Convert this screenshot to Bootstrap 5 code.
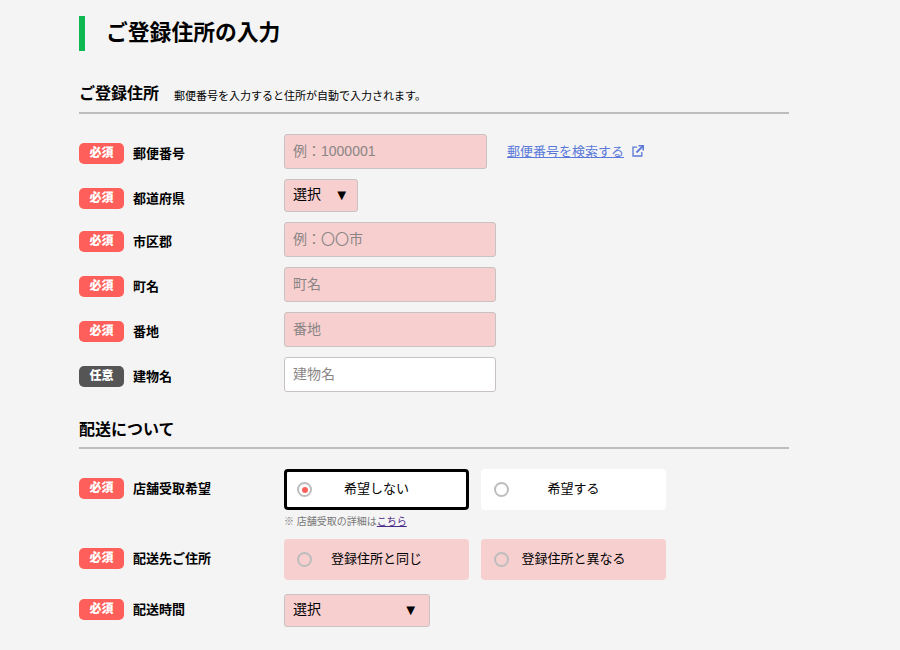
<!DOCTYPE html>
<html lang="ja">
<head>
<meta charset="utf-8">
<title>ご登録住所の入力</title>
<link href="https://cdn.jsdelivr.net/npm/bootstrap@5.3.0/dist/css/bootstrap.min.css" rel="stylesheet">
<style>
html, body { height: 650px; overflow: hidden; }
body { background: #f4f4f4; color: #000; font-family: "Liberation Sans", "Noto Sans CJK JP", sans-serif; }
.page-wrap { width: 710px; margin-left: 79px; padding-top: 16px; }
.page-title { border-left: 6px solid #0cb84f; padding-left: 21px; height: 35px; font-size: 21.8px; line-height: 33px; font-weight: 700; margin: 0; }
.sec-head { border-bottom: 2px solid #bdbdbd; height: 30px; font-size: 16px; font-weight: 700; line-height: 20px; margin: 0; }
.sec-first { margin-top: 33px; }
.sec-second { margin-top: 27px; padding-top: 1px; }
.sec-desc { font-size: 11px; font-weight: 400; margin-left: 15px; vertical-align: -1px; }
.form-rows { row-gap: 10px; margin-top: 20px; }
.label-col { width: 205px; padding-top: 9px; flex: none; }
.label-col.tight { padding-top: 5px; }
.req-tag { width: 45px; height: 21px; border-radius: 5px; background: #ff5f5a; color: #fff; font-size: 12px; font-weight: 900; line-height: 20px; text-align: center; flex: none; }
.req-tag.opt { background: #555; }
.label-text { font-size: 13px; font-weight: 700; margin-left: 9px; line-height: 21px; }
.fld { height: 35px; font-size: 14px; padding: 0 8px 2px; border: 1px solid #c9c2c2; border-radius: 3px; background: #fff; color: #000; box-shadow: none; }
.fld::placeholder { color: #8a8585; }
.fld.need { background: #f7cfcf; }
.w-zip { width: 203px; }
.w-std { width: 212px; }
.zip-link { display: block; height: 35px; padding-top: 1px; font-size: 13px; color: #5b79d8; margin-left: 20px; line-height: 34px; }
.ext-ico { width: 12px; height: 12px; margin-left: 8px; vertical-align: -1px; }
.sel-wrap { position: relative; height: 33px; }
.sel-wrap::after { content: "▼"; position: absolute; top: 6px; font-size: 15px; line-height: 20px; pointer-events: none; }
.sel-sm { width: 74px; }
.sel-sm::after { right: 9px; }
.sel-lg { width: 146px; }
.sel-lg::after { right: 12px; }
.sel-wrap select { width: 100%; height: 33px; font-size: 14px; padding: 0 8px 2px; border: 1px solid #c9c2c2; border-radius: 3px; background: #f7cfcf; color: #000; appearance: none; display: block; }
.radio-pair { gap: 12px; }
.radio-box { position: relative; width: 185px; height: 41px; border-radius: 4px; background: #fff; font-size: 13px; margin: 0; }
.radio-box span:last-child { padding-bottom: 2px; }
.radio-box.need { background: #f7cfcf; }
.radio-box.on { border: 3px solid #000; }
.radio-mark { position: absolute; left: 13px; top: 13px; width: 15px; height: 15px; border: 2px solid #bdbdbd; border-radius: 50%; }
.radio-box.on .radio-mark { left: 10px; top: 10px; }
.radio-box.on .radio-mark::after { content: ""; position: absolute; left: 2.5px; top: 2.5px; width: 6px; height: 6px; border-radius: 50%; background: #ff5f5a; }
.shop-note { font-size: 10px; color: #777; line-height: 14px; margin-top: 5px; }
.shop-note a { color: #4b2a8a; }
</style>
</head>
<body>
<div class="page-wrap">
  <h1 class="page-title">ご登録住所の入力</h1>

  <h2 class="sec-head sec-first">ご登録住所<span class="sec-desc">郵便番号を入力すると住所が自動で入力されます。</span></h2>
  <div class="d-flex flex-column form-rows">
    <div class="d-flex align-items-start">
      <div class="label-col d-flex"><span class="req-tag">必須</span><span class="label-text">郵便番号</span></div>
      <input class="form-control fld need w-zip" placeholder="例：1000001">
      <a href="#" class="zip-link">郵便番号を検索する<svg class="ext-ico" viewBox="0 0 12 12" fill="none" stroke="#5b79d8" stroke-width="1.3"><path d="M5 2.2H1v8.8h8.8V7"/><path d="M4.5 7.5 10.8 1.2" stroke-width="1.8"/><path d="M6.5 .8h4.7v4.7" stroke-width="1.6"/></svg></a>
    </div>
    <div class="d-flex align-items-start">
      <div class="label-col d-flex"><span class="req-tag">必須</span><span class="label-text">都道府県</span></div>
      <div class="sel-wrap sel-sm"><select><option>選択</option></select></div>
    </div>
    <div class="d-flex align-items-start">
      <div class="label-col d-flex"><span class="req-tag">必須</span><span class="label-text">市区郡</span></div>
      <input class="form-control fld need w-std" placeholder="例：〇〇市">
    </div>
    <div class="d-flex align-items-start">
      <div class="label-col d-flex"><span class="req-tag">必須</span><span class="label-text">町名</span></div>
      <input class="form-control fld need w-std" placeholder="町名">
    </div>
    <div class="d-flex align-items-start">
      <div class="label-col d-flex"><span class="req-tag">必須</span><span class="label-text">番地</span></div>
      <input class="form-control fld need w-std" placeholder="番地">
    </div>
    <div class="d-flex align-items-start">
      <div class="label-col d-flex"><span class="req-tag opt">任意</span><span class="label-text">建物名</span></div>
      <input class="form-control fld w-std" placeholder="建物名">
    </div>
  </div>

  <h2 class="sec-head sec-second">配送について</h2>
  <div class="d-flex flex-column form-rows">
    <div class="d-flex align-items-start">
      <div class="label-col d-flex"><span class="req-tag">必須</span><span class="label-text">店舗受取希望</span></div>
      <div>
        <div class="d-flex radio-pair">
          <label class="radio-box on d-flex align-items-center justify-content-center"><span class="radio-mark"></span><span>希望しない</span></label>
          <label class="radio-box d-flex align-items-center justify-content-center"><span class="radio-mark"></span><span>希望する</span></label>
        </div>
        <div class="shop-note">※ 店舗受取の詳細は<a href="#">こちら</a></div>
      </div>
    </div>
    <div class="d-flex align-items-start">
      <div class="label-col d-flex"><span class="req-tag">必須</span><span class="label-text">配送先ご住所</span></div>
      <div class="d-flex radio-pair">
        <label class="radio-box need d-flex align-items-center justify-content-center"><span class="radio-mark"></span><span>登録住所と同じ</span></label>
        <label class="radio-box need d-flex align-items-center justify-content-center"><span class="radio-mark"></span><span>登録住所と異なる</span></label>
      </div>
    </div>
    <div class="d-flex align-items-start mt-1">
      <div class="label-col tight d-flex"><span class="req-tag">必須</span><span class="label-text">配送時間</span></div>
      <div class="sel-wrap sel-lg"><select><option>選択</option></select></div>
    </div>
  </div>
</div>
<script src="https://cdn.jsdelivr.net/npm/bootstrap@5.3.0/dist/js/bootstrap.bundle.min.js"></script>
</body>
</html>
